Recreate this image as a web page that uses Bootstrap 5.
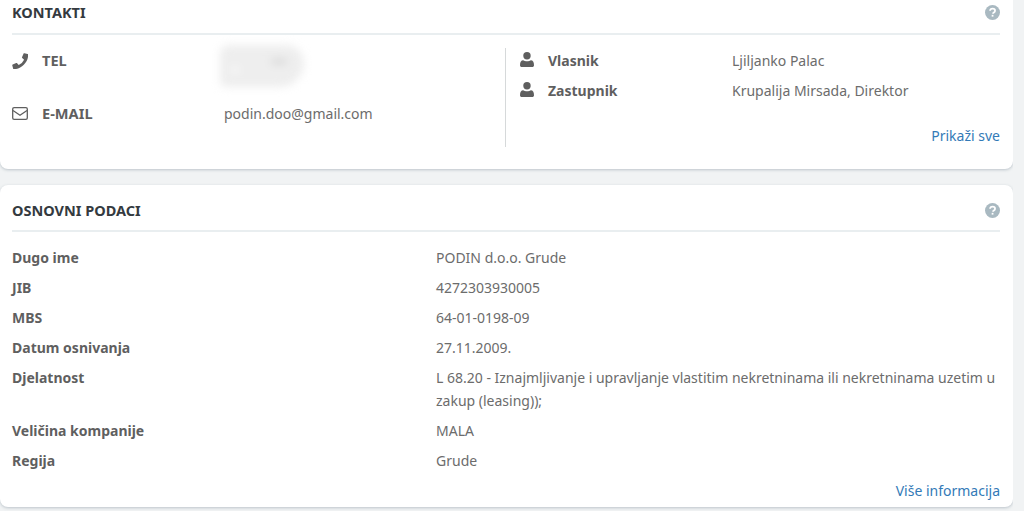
<!DOCTYPE html>
<html lang="en">
<head>
  <meta charset="UTF-8" />
  <meta name="viewport" content="width=device-width, initial-scale=1.0"/>
  <title>Kontakti</title>
  <link href="https://cdn.jsdelivr.net/npm/bootstrap@5.3.2/dist/css/bootstrap.min.css" rel="stylesheet"/>
  <style>
    html, body { height: 511px; overflow: hidden; }
    body {
      background: #f1f3f4;
      font-family: "Noto Sans", "Open Sans", sans-serif;
      font-size: 14px;
      line-height: 23px;
      color: #6c6c6c;
      width: 1013px;
    }
    .info-card {
      background: #fff;
      border: 0;
      border-radius: 8px;
      box-shadow: 0 1px 3px rgba(90, 110, 125, .35);
      padding: 0 13px 0 12px;
    }
    .card-top { border-radius: 0 0 8px 8px; height: 169px; }
    .card-main { margin-top: 16px; height: 322px; }
    .card-head {
      height: 35px;
      padding-bottom: 8px;
      border-bottom: 2px solid #e9eef0;
      color: #343a40;
      font-weight: 700;
      font-size: 14.5px;
    }
    .card-main .card-head { height: 47px; padding: 8px 0 3px; }
    .help-dot { width: 15px; height: 15px; flex: none; }
    .contact-col { padding-top: 14px; height: 112px; }
    .contact-col + .contact-col {
      border-left: 1px solid #d6d9da;
      padding: 0 0 0 14px;
      margin-top: 13px;
      height: 99px;
      margin-left: -1px;
      position: relative;
    }
    .item-label { color: #5f5f5f; font-weight: 700; }
    .item-caps { font-size: 14.6px; }
    .icon-slot { width: 30px; flex: none; display: flex; align-items: center; }
    .person-slot { width: 28px; height: 23px; padding-bottom: 3px; }
    .tel-label { width: 182px; flex: none; }
    .owner-label { width: 184px; flex: none; }
    .tel-row { height: 53px; }
    .blur-patch {
      width: 84px;
      height: 42px;
      margin: -4px 0 0 -4px;
      background: #eeeeee;
      border-radius: 14px 30px 40px 10px;
      filter: blur(4px);
      position: relative;
    }
    .blur-spot {
      position: absolute;
      left: 12px;
      top: 22px;
      width: 6px;
      height: 6px;
      border-radius: 50%;
      background: #fff;
    }
    .blur-smudge {
      position: absolute;
      left: 50px;
      top: 14px;
      width: 18px;
      height: 5px;
      border-radius: 50%;
      background: #d4d4d4;
    }
    .owner-row { height: 30px; padding-top: 1px; }
    .more-link { color: #337ab7; text-decoration: none; }
    .contact-more { position: absolute; right: -1px; bottom: 0; }
    .data-list { padding-top: 14px; }
    .data-row { display: flex; padding-bottom: 7px; }
    .data-key { width: 424px; flex: none; }
    .data-val { color: #6c6c6c; }
  </style>
</head>
<body>
  <div class="card info-card card-top">
    <div class="card-head d-flex justify-content-between align-items-center">
      <span>KONTAKTI</span>
      <svg class="help-dot" viewBox="0 0 16 16"><circle cx="8" cy="8" r="8" fill="#a9b9c1"/><path d="M5.4 6.2C5.500 4.700 6.600 3.900 8.100 3.900c1.500 0 2.600.9 2.600 2.100 0 1-.6 1.500-1.300 2-.6.4-.8.7-.8 1.300" fill="none" stroke="#fff" stroke-width="1.900"/><rect x="7.100" y="10.500" width="1.900" height="1.900" fill="#fff"/></svg>
    </div>
    <div class="row g-0">
      <div class="col-6 contact-col">
        <div class="d-flex tel-row">
          <span class="icon-slot align-self-start" style="height:23px">
            <svg width="16" height="16" viewBox="0 0 16 16"><path d="M15.600 1.100 12.400.3c-.4-.1-.7.1-.9.4L10 4.200c-.1.3 0 .7.2.9l1.900 1.600a11.600 11.600 0 0 1-5.400 5.400L5.100 10.200c-.2-.3-.6-.4-.9-.2L.7 11.500c-.3.2-.5.5-.4.900l.8 3.200c.1.300.4.600.7.600C9.300 16.200 16.200 9.300 16.200 1.800c0-.300-.300-.600-.600-.700z" fill="#5f5f5f"/></svg>
          </span>
          <span class="item-label item-caps tel-label">TEL</span>
          <div class="blur-patch"><span class="blur-spot"></span><span class="blur-smudge"></span></div>
        </div>
        <div class="d-flex">
          <span class="icon-slot">
            <svg width="16" height="13" viewBox="0 0 16 13"><rect x=".7" y=".7" width="14.600" height="11.600" rx="1.400" fill="none" stroke="#5f5f5f" stroke-width="1.300"/><path d="M1 3.500 8 8.300l7-4.800" fill="none" stroke="#5f5f5f" stroke-width="1.300"/></svg>
          </span>
          <span class="item-label item-caps tel-label">E-MAIL</span>
          <span>podin.doo@gmail.com</span>
        </div>
      </div>
      <div class="col-6 contact-col">
        <div class="d-flex owner-row">
          <span class="icon-slot person-slot">
            <svg width="14" height="15" viewBox="0 0 14 15"><circle cx="7" cy="3.800" r="3.700" fill="#5f5f5f"/><path d="M0 13.200c0-3.200 1.200-5 3.200-5 1 .7 2.400 1.100 3.800 1.100s2.800-.4 3.800-1.100c2 0 3.200 1.800 3.200 5 0 1.100-.7 1.800-1.800 1.800H1.800C.7 15 0 14.300 0 13.200z" fill="#5f5f5f"/></svg>
          </span>
          <span class="item-label owner-label">Vlasnik</span>
          <span>Ljiljanko Palac</span>
        </div>
        <div class="d-flex owner-row">
          <span class="icon-slot person-slot">
            <svg width="14" height="15" viewBox="0 0 14 15"><circle cx="7" cy="3.800" r="3.700" fill="#5f5f5f"/><path d="M0 13.200c0-3.200 1.200-5 3.200-5 1 .7 2.400 1.100 3.800 1.100s2.800-.4 3.800-1.100c2 0 3.200 1.800 3.200 5 0 1.100-.7 1.800-1.800 1.800H1.800C.7 15 0 14.300 0 13.200z" fill="#5f5f5f"/></svg>
          </span>
          <span class="item-label owner-label">Zastupnik</span>
          <span>Krupalija Mirsada, Direktor</span>
        </div>
        <a href="#" class="more-link contact-more">Prikaži sve</a>
      </div>
    </div>
  </div>

  <div class="card info-card card-main">
    <div class="card-head d-flex justify-content-between align-items-center">
      <span>OSNOVNI PODACI</span>
      <svg class="help-dot" viewBox="0 0 16 16"><circle cx="8" cy="8" r="8" fill="#a9b9c1"/><path d="M5.400 6.200C5.500 4.700 6.600 3.900 8.100 3.900c1.500 0 2.600.9 2.600 2.100 0 1-.6 1.500-1.300 2-.6.4-.8.7-.8 1.300" fill="none" stroke="#fff" stroke-width="1.900"/><rect x="7.100" y="10.500" width="1.900" height="1.900" fill="#fff"/></svg>
    </div>
    <div class="data-list">
      <div class="data-row"><span class="item-label data-key">Dugo ime</span><span class="data-val">PODIN d.o.o. Grude</span></div>
      <div class="data-row"><span class="item-label data-key">JIB</span><span class="data-val">4272303930005</span></div>
      <div class="data-row"><span class="item-label data-key">MBS</span><span class="data-val">64-01-0198-09</span></div>
      <div class="data-row"><span class="item-label data-key">Datum osnivanja</span><span class="data-val">27.11.2009.</span></div>
      <div class="data-row"><span class="item-label data-key">Djelatnost</span><span class="data-val">L 68.20 - Iznajmljivanje i upravljanje vlastitim nekretninama ili nekretninama uzetim u zakup (leasing));</span></div>
      <div class="data-row"><span class="item-label data-key">Veličina kompanije</span><span class="data-val">MALA</span></div>
      <div class="data-row"><span class="item-label data-key">Regija</span><span class="data-val">Grude</span></div>
    </div>
    <div class="text-end"><a href="#" class="more-link">Više informacija</a></div>
  </div>
  <script src="https://cdn.jsdelivr.net/npm/bootstrap@5.3.2/dist/js/bootstrap.bundle.min.js"></script>
</body>
</html>
